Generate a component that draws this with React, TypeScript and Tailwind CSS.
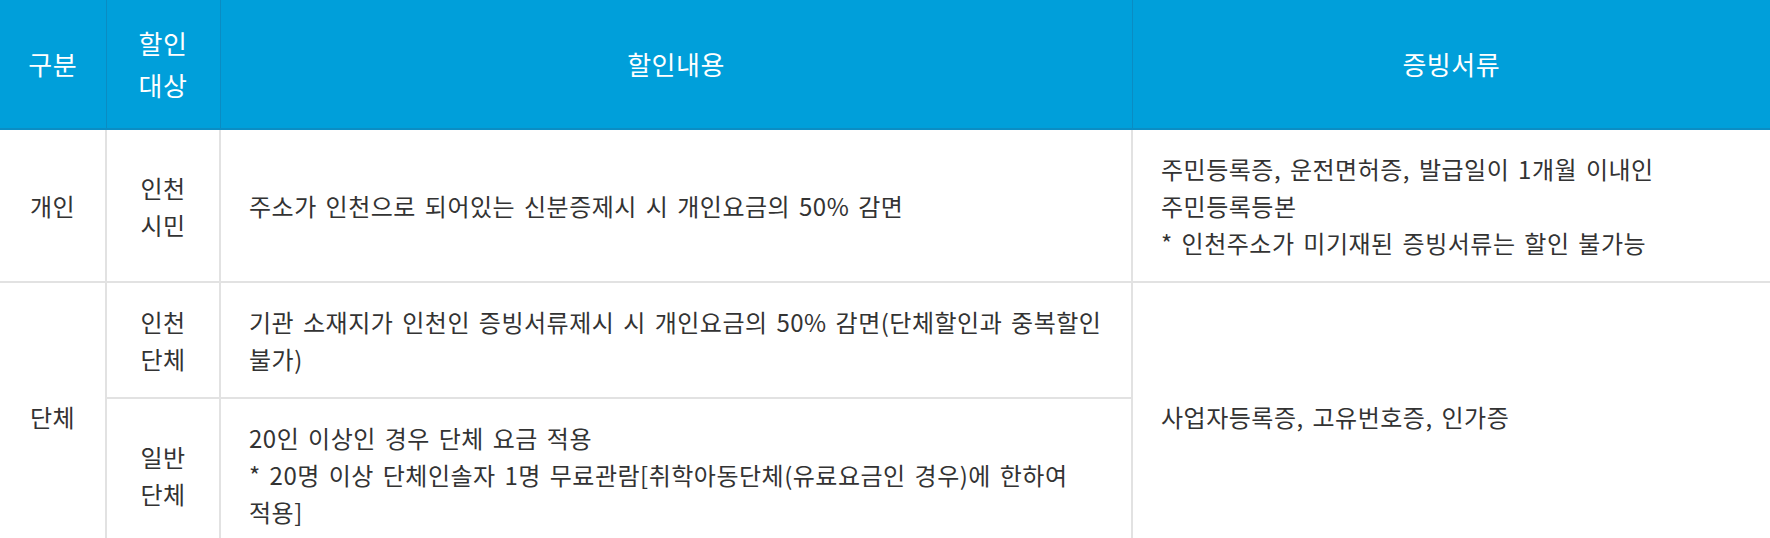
import React from "react";

const FONT = { fontFamily: '"Noto Sans CJK KR", "Noto Sans", sans-serif' };

export default function App() {
  const th =
    "bg-[#009fda] text-white font-normal text-[26px] leading-[42px] tracking-[0.5px] py-[22px] border-b-2 border-b-[#0b8dc4] border-x border-x-[#0a8cc2] text-center";
  const cell =
    "align-middle py-[20px] border-2 border-[#e2e2e2] text-[24px] leading-[37px] tracking-[0.5px] [word-spacing:3px] text-[#333] whitespace-nowrap";
  const tdCenter = `${cell} text-center`;
  const tdLeft = `${cell} text-left px-[28px]`;

  return (
    <div className="w-[1770px] bg-white" style={FONT}>
      <table className="w-full table-fixed border-collapse">
        <colgroup>
          <col className="w-[106px]" />
          <col className="w-[114px]" />
          <col className="w-[912px]" />
          <col />
        </colgroup>
        <thead>
          <tr>
            <th className={`${th} border-l-0`}>구분</th>
            <th className={th}>
              할인
              <br />
              대상
            </th>
            <th className={th}>할인내용</th>
            <th className={`${th} border-r-0`}>증빙서류</th>
          </tr>
        </thead>
        <tbody>
          <tr>
            <td className={`${tdCenter} border-l-0 border-t-0`}>개인</td>
            <td className={`${tdCenter} border-t-0`}>
              인천
              <br />
              시민
            </td>
            <td className={`${tdLeft} border-t-0`}>
              주소가 인천으로 되어있는 신분증제시 시 개인요금의 50% 감면
            </td>
            <td className={`${tdLeft} border-r-0 border-t-0`}>
              주민등록증, 운전면허증, 발급일이 1개월 이내인
              <br />
              주민등록등본
              <br />* 인천주소가 미기재된 증빙서류는 할인 불가능
            </td>
          </tr>
          <tr>
            <td rowSpan={2} className={`${tdCenter} border-l-0`}>
              단체
            </td>
            <td className={tdCenter}>
              인천
              <br />
              단체
            </td>
            <td className={tdLeft}>
              기관 소재지가 인천인 증빙서류제시 시 개인요금의 50% 감면(단체할인과 중복할인
              <br />
              불가)
            </td>
            <td rowSpan={2} className={`${tdLeft} border-r-0`}>
              사업자등록증, 고유번호증, 인가증
            </td>
          </tr>
          <tr>
            <td className={tdCenter}>
              일반
              <br />
              단체
            </td>
            <td className={tdLeft}>
              20인 이상인 경우 단체 요금 적용
              <br />* 20명 이상 단체인솔자 1명 무료관람[취학아동단체(유료요금인 경우)에 한하여
              <br />
              적용]
            </td>
          </tr>
        </tbody>
      </table>
    </div>
  );
}
